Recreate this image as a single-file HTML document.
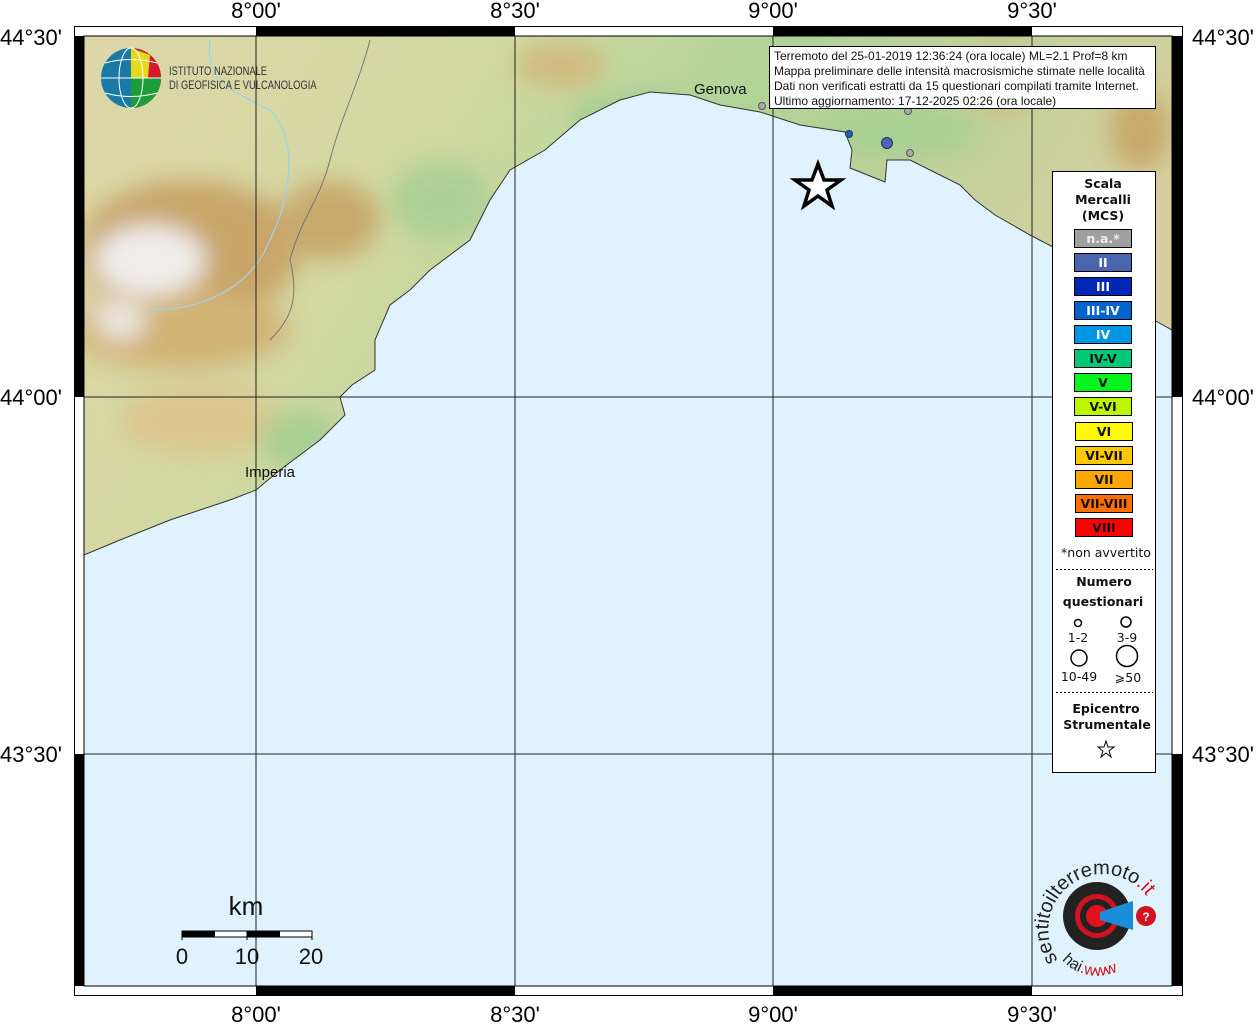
<!DOCTYPE html>
<html><head><meta charset="utf-8"><style>
body{margin:0;background:#fff;width:1256px;height:1024px;overflow:hidden;font-family:"Liberation Sans",sans-serif}
svg{display:block}
.lab{font-size:22px;font-family:"Liberation Sans",sans-serif;fill:#000}
.dv{font-family:"DejaVu Sans",sans-serif}
</style></head><body>
<svg width="1256" height="1024" viewBox="0 0 1256 1024" xmlns="http://www.w3.org/2000/svg">
<defs>
<linearGradient id="land" x1="0" y1="0" x2="1" y2="0.3">
<stop offset="0" stop-color="#ddd6a8"/><stop offset="0.35" stop-color="#d2d9a2"/><stop offset="0.6" stop-color="#b0d398"/><stop offset="1" stop-color="#d6cf9f"/>
</linearGradient>
<filter id="bl" x="-20%" y="-20%" width="140%" height="140%"><feGaussianBlur stdDeviation="12"/></filter>
<clipPath id="lc"><path d="M84,36 H1172 V330 L1100,290 L1055,248 L1030,235 L995,215 L975,200 L960,185 L910,160 L887,160 L885,182 L850,168 L852,150 L845,132 L800,125 L760,112 L720,105 L690,95 L650,92 L620,100 L580,120 L545,150 L510,170 L490,200 L470,240 L430,270 L410,290 L390,305 L375,340 L375,370 L352,385 L340,397 L345,415 L320,440 L280,470 L256,490 L230,500 L170,520 L120,540 L84,555 Z"/></clipPath>
</defs>
<rect x="84" y="36" width="1088" height="950" fill="#e0f2fd"/>
<path d="M84,36 H1172 V330 L1100,290 L1055,248 L1030,235 L995,215 L975,200 L960,185 L910,160 L887,160 L885,182 L850,168 L852,150 L845,132 L800,125 L760,112 L720,105 L690,95 L650,92 L620,100 L580,120 L545,150 L510,170 L490,200 L470,240 L430,270 L410,290 L390,305 L375,340 L375,370 L352,385 L340,397 L345,415 L320,440 L280,470 L256,490 L230,500 L170,520 L120,540 L84,555 Z" fill="url(#land)"/>
<g clip-path="url(#lc)"><g filter="url(#bl)" opacity="0.9">
<ellipse cx="190" cy="250" rx="110" ry="70" fill="#c8a063"/>
<ellipse cx="330" cy="220" rx="50" ry="40" fill="#c8a468"/>
<ellipse cx="180" cy="330" rx="110" ry="40" fill="#d2b072"/>
<ellipse cx="150" cy="260" rx="55" ry="35" fill="#f3f1f4"/>
<ellipse cx="120" cy="320" rx="25" ry="20" fill="#efeaea"/>
<ellipse cx="200" cy="420" rx="80" ry="35" fill="#dcc58a"/>
<ellipse cx="560" cy="65" rx="45" ry="22" fill="#d2b77a"/>
<ellipse cx="1000" cy="80" rx="40" ry="30" fill="#d0b478"/>
<ellipse cx="1140" cy="130" rx="30" ry="40" fill="#c8a566"/>
<ellipse cx="640" cy="120" rx="70" ry="25" fill="#9dcc90"/>
<ellipse cx="900" cy="130" rx="80" ry="25" fill="#a5cf92"/>
<ellipse cx="440" cy="200" rx="50" ry="40" fill="#a9cf94"/>
<ellipse cx="300" cy="440" rx="40" ry="30" fill="#a5cd92"/>
</g></g>
<path d="M84,36 H1172 V330 L1100,290 L1055,248 L1030,235 L995,215 L975,200 L960,185 L910,160 L887,160 L885,182 L850,168 L852,150 L845,132 L800,125 L760,112 L720,105 L690,95 L650,92 L620,100 L580,120 L545,150 L510,170 L490,200 L470,240 L430,270 L410,290 L390,305 L375,340 L375,370 L352,385 L340,397 L345,415 L320,440 L280,470 L256,490 L230,500 L170,520 L120,540 L84,555 Z" fill="none" stroke="#333" stroke-width="1"/>
<path d="M210,40 C205,80 230,90 270,110 C300,140 290,200 270,240 C250,290 200,310 150,310" fill="none" stroke="#9fd2ea" stroke-width="1.2"/>
<path d="M370,40 C360,80 340,120 330,160 C320,200 300,220 290,260 C300,300 290,320 270,340" fill="none" stroke="#777" stroke-width="1"/>
<g stroke="#222" stroke-width="1" fill="none">
<line x1="256" y1="36" x2="256" y2="986"/><line x1="515" y1="36" x2="515" y2="986"/><line x1="773" y1="36" x2="773" y2="986"/><line x1="1032" y1="36" x2="1032" y2="986"/>
<line x1="84" y1="397" x2="1172" y2="397"/><line x1="84" y1="754" x2="1172" y2="754"/>
</g>
<rect x="74.5" y="26.5" width="1108" height="969" fill="none" stroke="#000" stroke-width="1"/>
<rect x="84" y="36" width="1088" height="950" fill="none" stroke="#000" stroke-width="1"/>
<g fill="#000">
<rect x="256" y="26" width="259" height="10"/><rect x="773" y="26" width="259" height="10"/>
<rect x="256" y="986" width="259" height="10"/><rect x="773" y="986" width="259" height="10"/>
<rect x="74" y="36" width="10" height="361"/><rect x="74" y="754" width="10" height="232"/>
<rect x="1172" y="36" width="10" height="361"/><rect x="1172" y="754" width="10" height="232"/>
</g>
<g class="lab" text-anchor="middle">
<text x="256" y="18">8°00'</text><text x="515" y="18">8°30'</text><text x="773" y="18">9°00'</text><text x="1032" y="18">9°30'</text>
<text x="256" y="1022">8°00'</text><text x="515" y="1022">8°30'</text><text x="773" y="1022">9°00'</text><text x="1032" y="1022">9°30'</text>
</g>
<g class="lab">
<text x="0" y="45">44°30'</text><text x="0" y="405">44°00'</text><text x="0" y="762">43°30'</text>
<text x="1192" y="45">44°30'</text><text x="1192" y="405">44°00'</text><text x="1192" y="762">43°30'</text>
</g>
<circle cx="131" cy="78" r="30" fill="#1a7aa6"/>
<path d="M131,48 A30,30 0 0 1 161,78 A30,30 0 0 1 131,108 Z" fill="#d7192c"/>
<path d="M131,48 L150,55 L148,78 L131,78Z" fill="#e6d91b"/>
<path d="M131,78 L161,78 A30,30 0 0 1 131,108Z" fill="#1d9c3a"/>
<g stroke="#fff" stroke-width="1" fill="none"><ellipse cx="131" cy="78" rx="12" ry="30"/><line x1="101" y1="78" x2="161" y2="78"/><path d="M105,63 Q131,56 157,63"/><path d="M105,93 Q131,100 157,93"/></g>
<text x="169" y="75" font-size="12" fill="#333" transform="translate(169 0) scale(0.78 1) translate(-169 0)">ISTITUTO NAZIONALE</text>
<text x="169" y="89" font-size="12" fill="#333" transform="translate(169 0) scale(0.78 1) translate(-169 0)">DI GEOFISICA E VULCANOLOGIA</text>
<text x="694" y="94" font-size="15" fill="#111">Genova</text>
<text x="245" y="477" font-size="15" fill="#111">Imperia</text>
<g stroke="#555" stroke-width="1" fill="#aaa"><circle cx="762" cy="106" r="3.5"/><circle cx="908" cy="111" r="3.5"/><circle cx="910" cy="153" r="3.5"/></g>
<circle cx="849" cy="134" r="3.5" fill="#1c5fcf" stroke="#333"/>
<circle cx="887" cy="143" r="5.5" fill="#4b64bd" stroke="#333"/>
<path d="M818,164 L824,180 L841,180 L827,190 L832,206 L818,196 L804,206 L809,190 L795,180 L812,180 Z" fill="#fff" stroke="#000" stroke-width="3.5"/>
<rect x="769.5" y="46.5" width="386" height="62" fill="#fff" stroke="#000"/>
<g font-size="12" fill="#111">
<text x="774" y="60">Terremoto del 25-01-2019 12:36:24 (ora locale) ML=2.1 Prof=8 km</text>
<text x="774" y="75">Mappa preliminare delle intensità macrosismiche stimate nelle località</text>
<text x="774" y="90">Dati non verificati estratti da 15 questionari compilati tramite Internet.</text>
<text x="774" y="105">Ultimo aggiornamento: 17-12-2025 02:26 (ora locale)</text>
</g>
<rect x="1052.5" y="171.5" width="103" height="601" fill="#fff" stroke="#000"/>
<g class="dv" font-size="12.5" font-weight="bold" text-anchor="middle" fill="#111">
<text x="1103" y="188">Scala</text><text x="1103" y="204">Mercalli</text><text x="1103" y="220">(MCS)</text>
</g>
<g stroke="#000">
<rect x="1074.5" y="229.5" width="57" height="18" fill="#9f9f9f"/>
<rect x="1074.5" y="253.5" width="57" height="18" fill="#4a64ae"/>
<rect x="1074.5" y="277.5" width="57" height="18" fill="#0027b5"/>
<rect x="1074.5" y="301.5" width="57" height="18" fill="#0064cc"/>
<rect x="1074.5" y="325.5" width="57" height="18" fill="#0096e6"/>
<rect x="1074.5" y="349.5" width="57" height="18" fill="#00c878"/>
<rect x="1074.5" y="373.5" width="57" height="18" fill="#05f51e"/>
<rect x="1074.5" y="397.5" width="57" height="18" fill="#bef500"/>
<rect x="1075.5" y="422.5" width="57" height="18" fill="#fffa00"/>
<rect x="1075.5" y="446.5" width="57" height="18" fill="#ffc800"/>
<rect x="1075.5" y="470.5" width="57" height="18" fill="#ffa500"/>
<rect x="1075.5" y="494.5" width="57" height="18" fill="#ff6e00"/>
<rect x="1075.5" y="518.5" width="57" height="18" fill="#ff0000"/>
</g>
<g class="dv" font-size="12.5" font-weight="bold" text-anchor="middle">
<text x="1103" y="243" fill="#eee">n.a.*</text><text x="1103" y="267" fill="#fff">II</text><text x="1103" y="291" fill="#fff">III</text><text x="1103" y="315" fill="#fff">III-IV</text><text x="1103" y="339" fill="#fff">IV</text>
<text x="1103" y="363" fill="#111">IV-V</text><text x="1103" y="387" fill="#111">V</text><text x="1103" y="411" fill="#111">V-VI</text><text x="1104" y="436" fill="#111">VI</text><text x="1104" y="460" fill="#111">VI-VII</text><text x="1104" y="484" fill="#111">VII</text><text x="1104" y="508" fill="#111">VII-VIII</text><text x="1104" y="532" fill="#111">VIII</text>
</g>
<text x="1106" y="557" class="dv" font-size="12.5" text-anchor="middle" fill="#111">*non avvertito</text>
<line x1="1056" y1="569.5" x2="1153" y2="569.5" stroke="#000" stroke-dasharray="2,2"/>
<g class="dv" font-size="12.5" font-weight="bold" text-anchor="middle" fill="#111"><text x="1104" y="586">Numero</text><text x="1103" y="606">questionari</text></g>
<g fill="none" stroke="#000" stroke-width="1.5"><circle cx="1078" cy="623" r="3.5"/><circle cx="1126" cy="622" r="5"/><circle cx="1079" cy="658" r="8"/><circle cx="1127" cy="656" r="10.5"/></g>
<g class="dv" font-size="12.5" text-anchor="middle" fill="#111"><text x="1078" y="642">1-2</text><text x="1127" y="642">3-9</text><text x="1079" y="681">10-49</text><text x="1128" y="682">⩾50</text></g>
<line x1="1056" y1="692.5" x2="1153" y2="692.5" stroke="#000" stroke-dasharray="2,2"/>
<g class="dv" font-size="12.5" font-weight="bold" text-anchor="middle" fill="#111"><text x="1106" y="713">Epicentro</text><text x="1107" y="729">Strumentale</text></g>
<path d="M1106,741 L1108,747 L1114,747 L1109,751 L1111,757 L1106,753 L1101,757 L1103,751 L1098,747 L1104,747 Z" fill="#fff" stroke="#000"/>
<text x="246" y="915" font-size="26" text-anchor="middle" fill="#111">km</text>
<rect x="182" y="931" width="130" height="6" fill="#fff" stroke="#000"/>
<rect x="182" y="931" width="33" height="6" fill="#000"/><rect x="247" y="931" width="33" height="6" fill="#000"/>
<g stroke="#000"><line x1="182" y1="931" x2="182" y2="940"/><line x1="247" y1="931" x2="247" y2="940"/><line x1="312" y1="931" x2="312" y2="940"/></g>
<g font-size="22" text-anchor="middle" fill="#111"><text x="182" y="964">0</text><text x="247" y="964">10</text><text x="311" y="964">20</text></g>
<circle cx="1097" cy="916" r="34" fill="#222"/>
<circle cx="1097" cy="916" r="22" fill="#d3121f"/>
<circle cx="1097" cy="916" r="17" fill="#222"/>
<circle cx="1097" cy="916" r="11" fill="#e3101f"/>
<path d="M1100,912 L1133,901 L1133,930 L1100,920 Z" fill="#1a8ed8"/>
<circle cx="1146" cy="916" r="10" fill="#d3121f"/>
<text x="1146" y="921" font-size="12" font-weight="bold" text-anchor="middle" fill="#fff">?</text>
<path id="arc" d="M1058,960 A50,50 0 1 1 1148,898" fill="none"/>
<text font-size="20" fill="#222"><textPath href="#arc">sentitoilterremoto<tspan fill="#d3121f">.it</tspan></textPath></text>
<path id="arc2" d="M1062,960 A48,48 0 0 0 1140,950" fill="none"/>
<text font-size="16" fill="#222"><textPath href="#arc2">hai<tspan fill="#d3121f">.www</tspan></textPath></text>
</svg>
</body></html>
